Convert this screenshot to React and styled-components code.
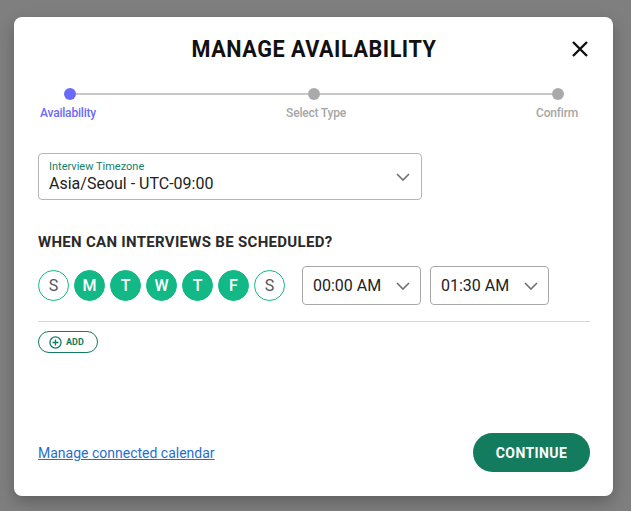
import React from "react";
import styled, { createGlobalStyle } from "styled-components";

const Global = createGlobalStyle`
  html, body { margin: 0; padding: 0; }
  body { background: #7f7f7f; font-family: Roboto, "Liberation Sans", sans-serif; }
  * { box-sizing: border-box; }
`;

const Overlay = styled.div`
  width: 631px;
  height: 511px;
  padding: 17px 18px 15px 14px;
  background: #7f7f7f;
`;

const Modal = styled.div`
  width: 599px;
  height: 479px;
  background: #fff;
  border-radius: 8px;
  box-shadow: 0 6px 16px rgba(0,0,0,0.25);
  padding: 18px 23px 24px 24px;
  display: flex;
  flex-direction: column;
`;

const Header = styled.div`
  position: relative;
  display: flex;
  justify-content: center;
  align-items: center;
  height: 28px;
`;

const Title = styled.h1`
  margin: 0;
  font-family: Roboto, sans-serif;
  font-weight: 700;
  font-size: 24px;
  letter-spacing: 0.6px;
  color: #111;
  transform: scaleX(0.9);
`;

const Close = styled.button`
  position: absolute;
  right: 0;
  top: 4px;
  border: 0;
  background: none;
  padding: 0;
  width: 20px;
  height: 20px;
  cursor: pointer;
`;

const Stepper = styled.div`
  margin-top: 25px;
  position: relative;
  height: 40px;
`;

const Track = styled.div`
  display: flex;
  align-items: center;
  padding: 0 26px 0 26px;
`;

const Dot = styled.span`
  width: 12px;
  height: 12px;
  border-radius: 50%;
  background: ${p => (p.$active ? "#6b6bfa" : "#aaaaaa")};
  flex: none;
`;

const Line = styled.span`
  flex: 1;
  height: 2px;
  background: #c8c8c8;
`;

const Labels = styled.div`
  display: flex;
  justify-content: space-between;
  margin-top: 6px;
  padding: 0 12px 0 2px;
`;

const StepLabel = styled.span`
  font-size: 12px;
  font-weight: 500;
  color: ${p => (p.$active ? "#6b6bfa" : "#a6a6a6")};
  letter-spacing: -0.2px;
`;

const Field = styled.div`
  margin-top: 25px;
  width: 384px;
  height: 47px;
  border: 1px solid #b5b5b5;
  border-radius: 4px;
  padding: 6px 10px 0 10px;
  position: relative;
`;

const FieldLabel = styled.div`
  font-size: 11px;
  color: #16806a;
  line-height: 13px;
`;

const FieldValue = styled.div`
  font-size: 16px;
  color: #222;
  line-height: 20px;
  margin-top: 1px;
`;

const Chevron = styled.svg`
  position: absolute;
  right: ${p => p.$right || 10}px;
  top: 50%;
  margin-top: -4px;
`;

const Question = styled.h2`
  margin: 34px 0 0 0;
  font-size: 15px;
  font-weight: 700;
  color: #2a2a2a;
  letter-spacing: 0.3px;
  line-height: 17px;
`;

const Row = styled.div`
  display: flex;
  align-items: center;
  margin-top: 15px;
`;

const Days = styled.div`
  display: flex;
  gap: 5px;
`;

const Day = styled.span`
  width: 31px;
  height: 31px;
  border-radius: 50%;
  display: flex;
  align-items: center;
  justify-content: center;
  font-size: 16px;
  font-weight: ${p => (p.$on ? 500 : 400)};
  color: ${p => (p.$on ? "#fff" : "#555")};
  background: ${p => (p.$on ? "#12b886" : "#fff")};
  border: 1px solid #12b886;
`;

const Times = styled.div`
  display: flex;
  gap: 9px;
  margin-left: 17px;
`;

const TimeSelect = styled.div`
  position: relative;
  width: 119px;
  height: 39px;
  border: 1px solid #a8a8a8;
  border-radius: 4px;
  display: flex;
  align-items: center;
  padding-left: 10px;
  font-size: 16px;
  color: #222;
`;

const Divider = styled.hr`
  margin: 16px 0 0 0;
  border: 0;
  border-top: 1px solid #d6d6d6;
`;

const AddButton = styled.button`
  margin-top: 9px;
  align-self: flex-start;
  height: 22px;
  width: 60px;
  border: 1px solid #137b5e;
  border-radius: 11px;
  background: #fff;
  display: flex;
  align-items: center;
  gap: 4px;
  padding: 0 0 0 10px;
  font-family: Roboto, sans-serif;
  font-size: 9px;
  font-weight: 700;
  color: #137b5e;
  cursor: pointer;
`;

const Footer = styled.div`
  margin-top: auto;
  display: flex;
  justify-content: space-between;
  align-items: center;
`;

const Link = styled.a`
  font-size: 14px;
  color: #1f6fd0;
  text-decoration: underline;
  cursor: pointer;
`;

const Continue = styled.button`
  width: 117px;
  height: 39px;
  border: 0;
  border-radius: 20px;
  background: #137b5e;
  color: #fff;
  font-family: Roboto, sans-serif;
  font-weight: 700;
  font-size: 14px;
  letter-spacing: 0.4px;
  cursor: pointer;
`;

const ChevronIcon = ({ right }) => (
  <Chevron $right={right} width="14" height="8" viewBox="0 0 14 8">
    <path d="M1 1l6 6 6-6" fill="none" stroke="#6f6f6f" strokeWidth="1.6" />
  </Chevron>
);

const days = [
  ["S", false], ["M", true], ["T", true], ["W", true], ["T", true], ["F", true], ["S", false],
];

export default function App() {
  return (
    <>
      <Global />
      <Overlay>
        <Modal>
          <Header>
            <Title>MANAGE AVAILABILITY</Title>
            <Close aria-label="close">
              <svg width="20" height="20" viewBox="0 0 20 20">
                <path d="M3 3l14 14M17 3L3 17" stroke="#111" strokeWidth="2.4" />
              </svg>
            </Close>
          </Header>
          <Stepper>
            <Track>
              <Dot $active />
              <Line />
              <Dot />
              <Line />
              <Dot />
            </Track>
            <Labels>
              <StepLabel $active>Availability</StepLabel>
              <StepLabel>Select Type</StepLabel>
              <StepLabel>Confirm</StepLabel>
            </Labels>
          </Stepper>
          <Field>
            <FieldLabel>Interview Timezone</FieldLabel>
            <FieldValue>Asia/Seoul - UTC-09:00</FieldValue>
            <ChevronIcon right={11} />
          </Field>
          <Question>WHEN CAN INTERVIEWS BE SCHEDULED?</Question>
          <Row>
            <Days>
              {days.map(([l, on], i) => (
                <Day key={i} $on={on}>{l}</Day>
              ))}
            </Days>
            <Times>
              <TimeSelect>00:00 AM<ChevronIcon right={10} /></TimeSelect>
              <TimeSelect>01:30 AM<ChevronIcon right={10} /></TimeSelect>
            </Times>
          </Row>
          <Divider />
          <AddButton>
            <svg width="13" height="13" viewBox="0 0 14 14">
              <circle cx="7" cy="7" r="6" fill="none" stroke="#137b5e" strokeWidth="1.4" />
              <path d="M7 3.8v6.4M3.8 7h6.4" stroke="#137b5e" strokeWidth="1.4" />
            </svg>
            ADD
          </AddButton>
          <Footer>
            <Link>Manage connected calendar</Link>
            <Continue>CONTINUE</Continue>
          </Footer>
        </Modal>
      </Overlay>
    </>
  );
}
